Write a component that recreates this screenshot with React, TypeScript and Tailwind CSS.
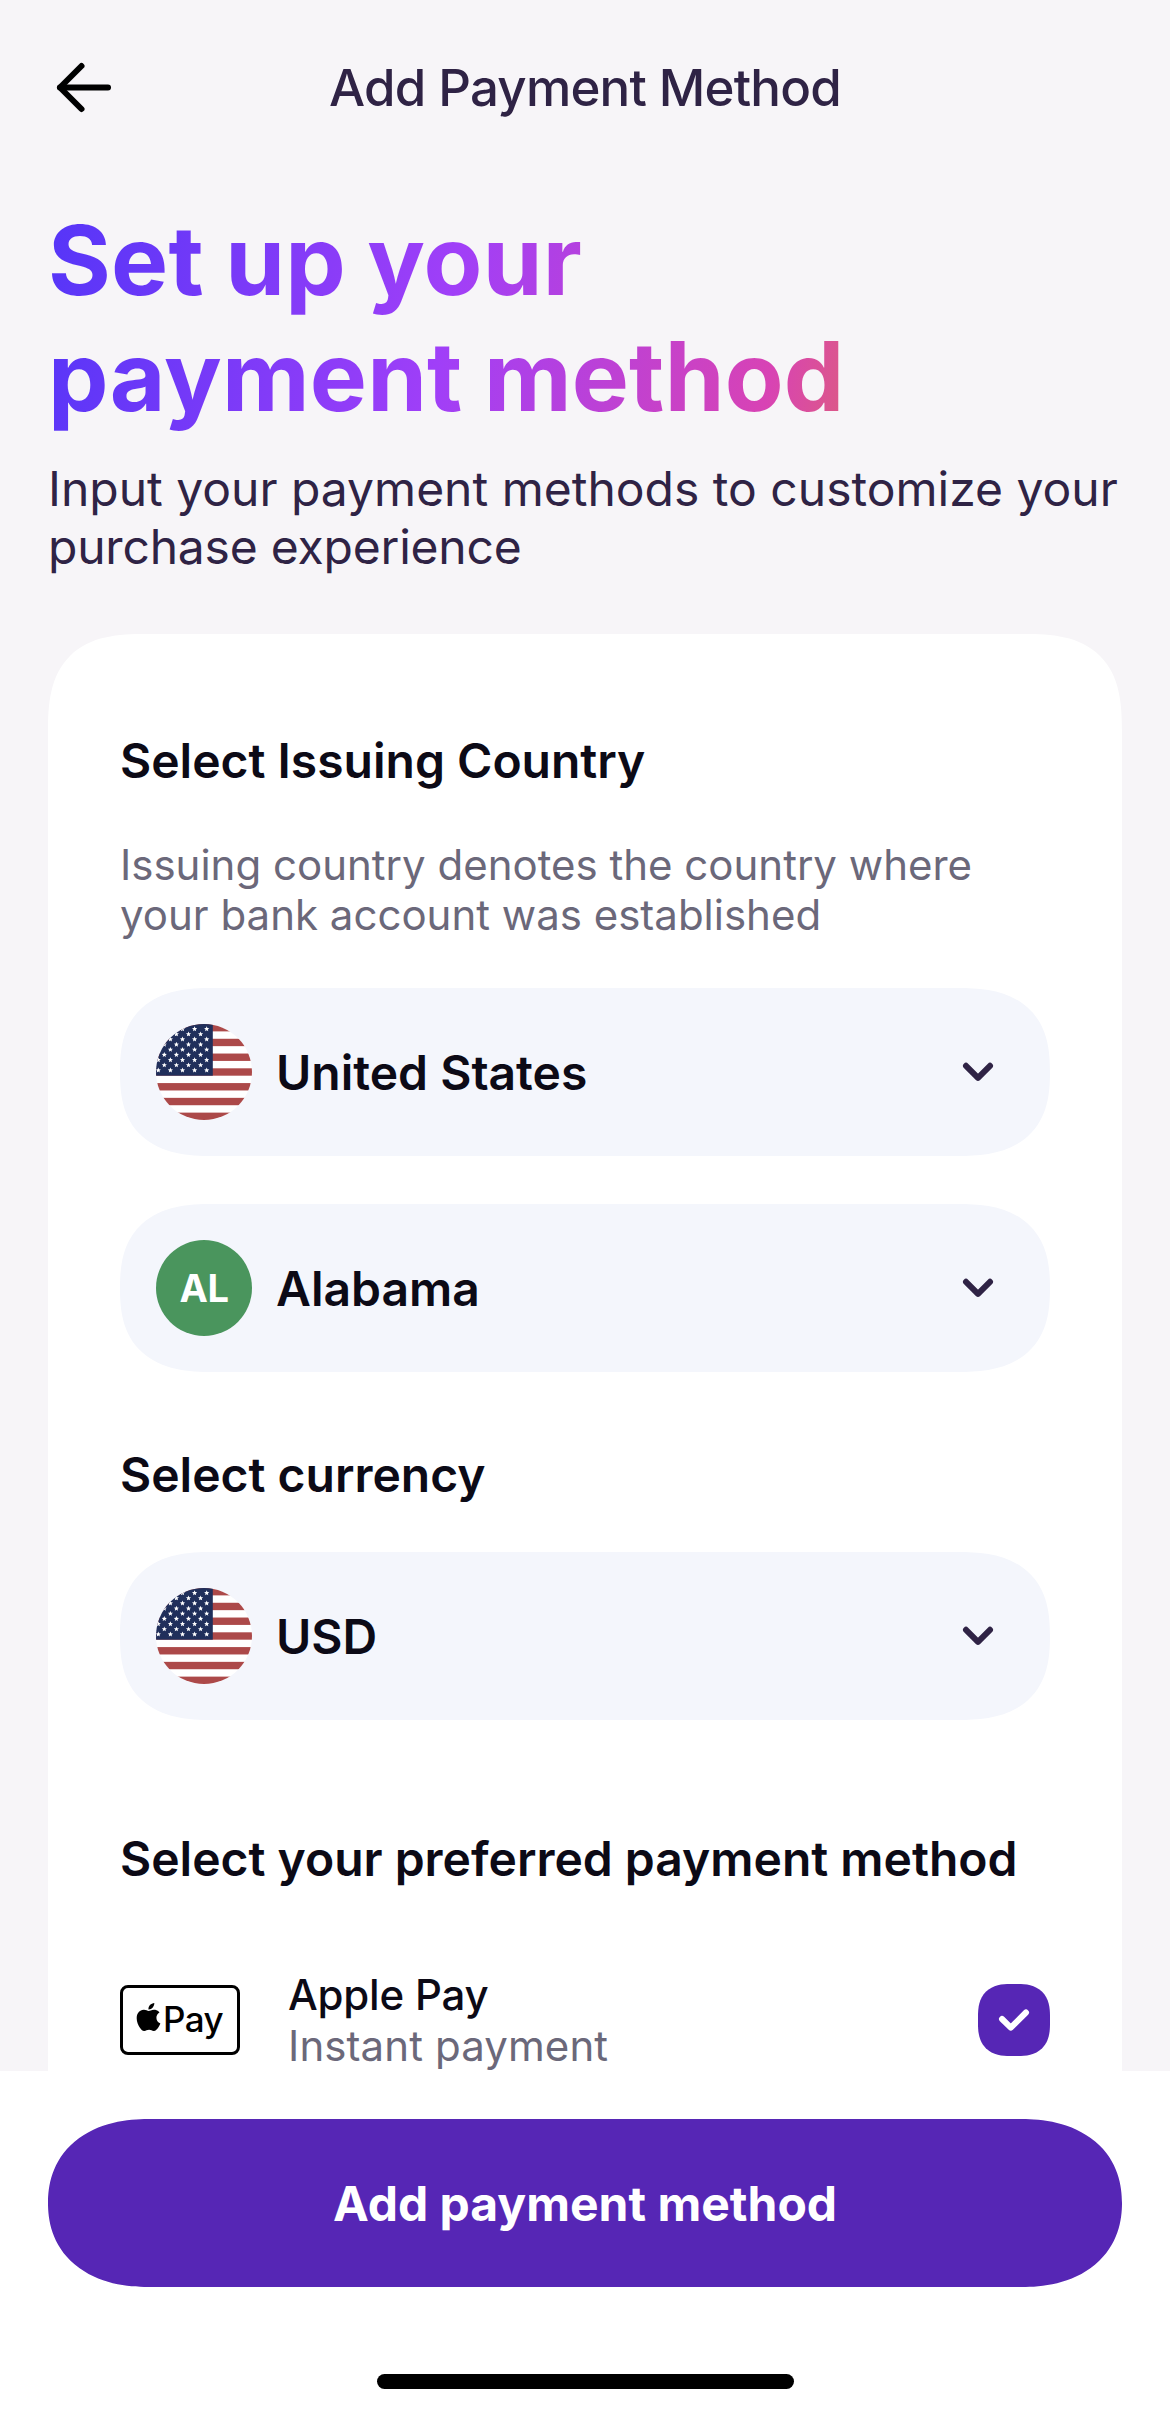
import React from 'react';
import { SiApple } from 'react-icons/si';

interface SelectFieldProps {
  label: string;
  icon: React.ReactNode;
  className?: string;
}

const flagSize = 96;
const stripe = flagSize / 13;

const starPath = (cx: number, cy: number, r: number) =>
  Array.from({ length: 10 }, (_, i) => {
    const radius = i % 2 === 0 ? r : r * 0.45;
    const angle = (Math.PI / 5) * i - Math.PI / 2;
    return `${i === 0 ? 'M' : 'L'}${(cx + radius * Math.cos(angle)).toFixed(2)} ${(cy + radius * Math.sin(angle)).toFixed(2)}`;
  }).join('') + 'Z';

// 9 staggered rows of stars, right-aligned to the canton
const stars = Array.from({ length: 9 }, (_, row) =>
  Array.from({ length: row % 2 === 0 ? 5 : 4 }, (_, col) => ({
    x: (row % 2 === 0 ? 50.7 : 44.6) - col * 12.1,
    y: 5 + row * 5.16
  }))
).flat();

const UsFlag = () => (
  <svg viewBox="0 0 96 96" className="w-24 h-24 rounded-full shrink-0">
    <rect width="96" height="96" fill="#ffffff" />
    {[0, 2, 4, 6, 8, 10, 12].map((i) => (
      <rect key={i} y={i * stripe} width="96" height={stripe} fill="#ac4949" />
    ))}
    <rect width="56.8" height={stripe * 7} fill="#202f5b" />
    {stars.map((s) => (
      <path key={`${s.x}-${s.y}`} d={starPath(s.x, s.y, 2.7)} fill="#ffffff" />
    ))}
  </svg>
);

const StateBadge = ({ code }: { code: string }) => (
  <div className="w-24 h-24 rounded-full bg-[#4a955d] flex items-center justify-center text-white text-[38px] font-bold tracking-[-0.5px] shrink-0">
    {code}
  </div>
);

const BackArrow = () => (
  <svg width="72" height="72" viewBox="0 0 72 72" fill="none" stroke="#000000" strokeWidth="6" strokeLinecap="round" strokeLinejoin="round">
    <path d="M60 35.5H12" />
    <path d="M33.5 14L12 35.5L33.5 57" />
  </svg>
);

const ChevronIcon = () => (
  <svg width="72" height="72" viewBox="0 0 72 72" fill="none" stroke="#2f2345" strokeWidth="6" strokeLinecap="round" strokeLinejoin="round">
    <path d="M24 29.8L36 41.8L48 29.8" />
  </svg>
);

const SelectField = ({ label, icon, className = '' }: SelectFieldProps) => (
  <button
    className={`w-full h-[168px] px-9 bg-[#f4f6fc] rounded-[92px/84px] [corner-shape:superellipse(1.35)] flex items-center text-left ${className}`}
  >
    {icon}
    <span className="ml-6 pt-[2px] flex-1 text-[48px] font-semibold text-[#0c0a16]">{label}</span>
    <ChevronIcon />
  </button>
);

const SectionTitle = ({ children, className = '' }: { children: React.ReactNode; className?: string }) => (
  <h2 className={`text-[48px] leading-[58px] font-semibold text-[#0c0a16] whitespace-nowrap ${className}`}>{children}</h2>
);

const ApplePayRow = () => (
  <div className="mt-[81px] flex items-center">
    <div className="w-[120px] h-[70px] pb-[2px] pr-[3px] border-[3px] border-black rounded-[8px] bg-white flex items-center justify-center shrink-0">
      <SiApple preserveAspectRatio="none" className="w-[29px] h-[28px] -mt-1 shrink-0" />
      <span className="text-[35px] leading-none font-medium tracking-[-0.6px] text-black">Pay</span>
    </div>
    <div className="ml-12 flex-1 text-[42px] leading-[51px]">
      <div className="font-medium tracking-[-0.2px] text-[#0c0a16]">Apple Pay</div>
      <div className="tracking-[0.1px] text-[#6b687a]">Instant payment</div>
    </div>
    <div className="w-[72px] h-[72px] bg-[#5626b5] rounded-[32px] [corner-shape:superellipse(1.3)] flex items-center justify-center">
      <svg width="72" height="72" viewBox="0 0 72 72" fill="none" stroke="#ffffff" strokeWidth="6" strokeLinecap="round" strokeLinejoin="round">
        <path d="M24 35L32.8 43.6L48 28.5" />
      </svg>
    </div>
  </div>
);

export default function App() {
  return (
    <div className="w-[1170px] h-[2413px] bg-[#f7f5f8] font-[Inter,sans-serif] flex flex-col overflow-hidden">
      <header className="h-[175px] px-12 grid grid-cols-[72px_1fr_72px] items-center shrink-0">
        <BackArrow />
        <h1 className="pt-[2px] text-center text-[51px] font-medium tracking-[-0.8px] text-[#2f2345]">Add Payment Method</h1>
      </header>

      <main className="h-[1896px] px-12 overflow-hidden shrink-0">
        <div className="mt-[27px] w-fit text-[96px] leading-[116px] font-bold tracking-[0.2px] [word-spacing:-1.5px] text-transparent bg-clip-text bg-[linear-gradient(100deg,#5535f8_0%,#a03ff8_50%,#d843b4_90%,#dc5a85_100%)]">
          Set up your
          <br />
          payment method
        </div>
        <p className="mt-[26px] text-[48px] leading-[58px] text-[#2f2345] whitespace-nowrap">
          Input your payment methods to customize your
          <br />
          <span className="tracking-[-0.2px]">purchase experience</span>
        </p>

        {/* Form card, runs under the footer */}
        <section className="mt-[58px] h-[1600px] px-[72px] pt-[98px] bg-white rounded-[98px] [corner-shape:superellipse(1.45)]">
          <SectionTitle>Select Issuing Country</SectionTitle>
          <p className="mt-[50px] text-[42px] leading-[50px] text-[#6b687a]">
            Issuing country denotes the country where
            <br />
            your bank account was established
          </p>
          <SelectField className="mt-12" label="United States" icon={<UsFlag />} />
          <SelectField className="mt-12" label="Alabama" icon={<StateBadge code="AL" />} />

          <SectionTitle className="mt-[74px]">Select currency</SectionTitle>
          <SelectField className="mt-12" label="USD" icon={<UsFlag />} />

          <SectionTitle className="mt-[110px]">Select your preferred payment method</SectionTitle>
          <ApplePayRow />
        </section>
      </main>

      <footer className="flex-1 px-12 pt-12 pb-6 bg-white flex flex-col items-center justify-between">
        <button className="w-full h-[168px] pt-[2px] bg-[#5626b5] rounded-[100px/84px] [corner-shape:superellipse(1.15)] text-white text-[48px] font-bold">
          Add payment method
        </button>
        <div className="w-[417px] h-[15px] rounded-full bg-black" />
      </footer>
    </div>
  );
}
